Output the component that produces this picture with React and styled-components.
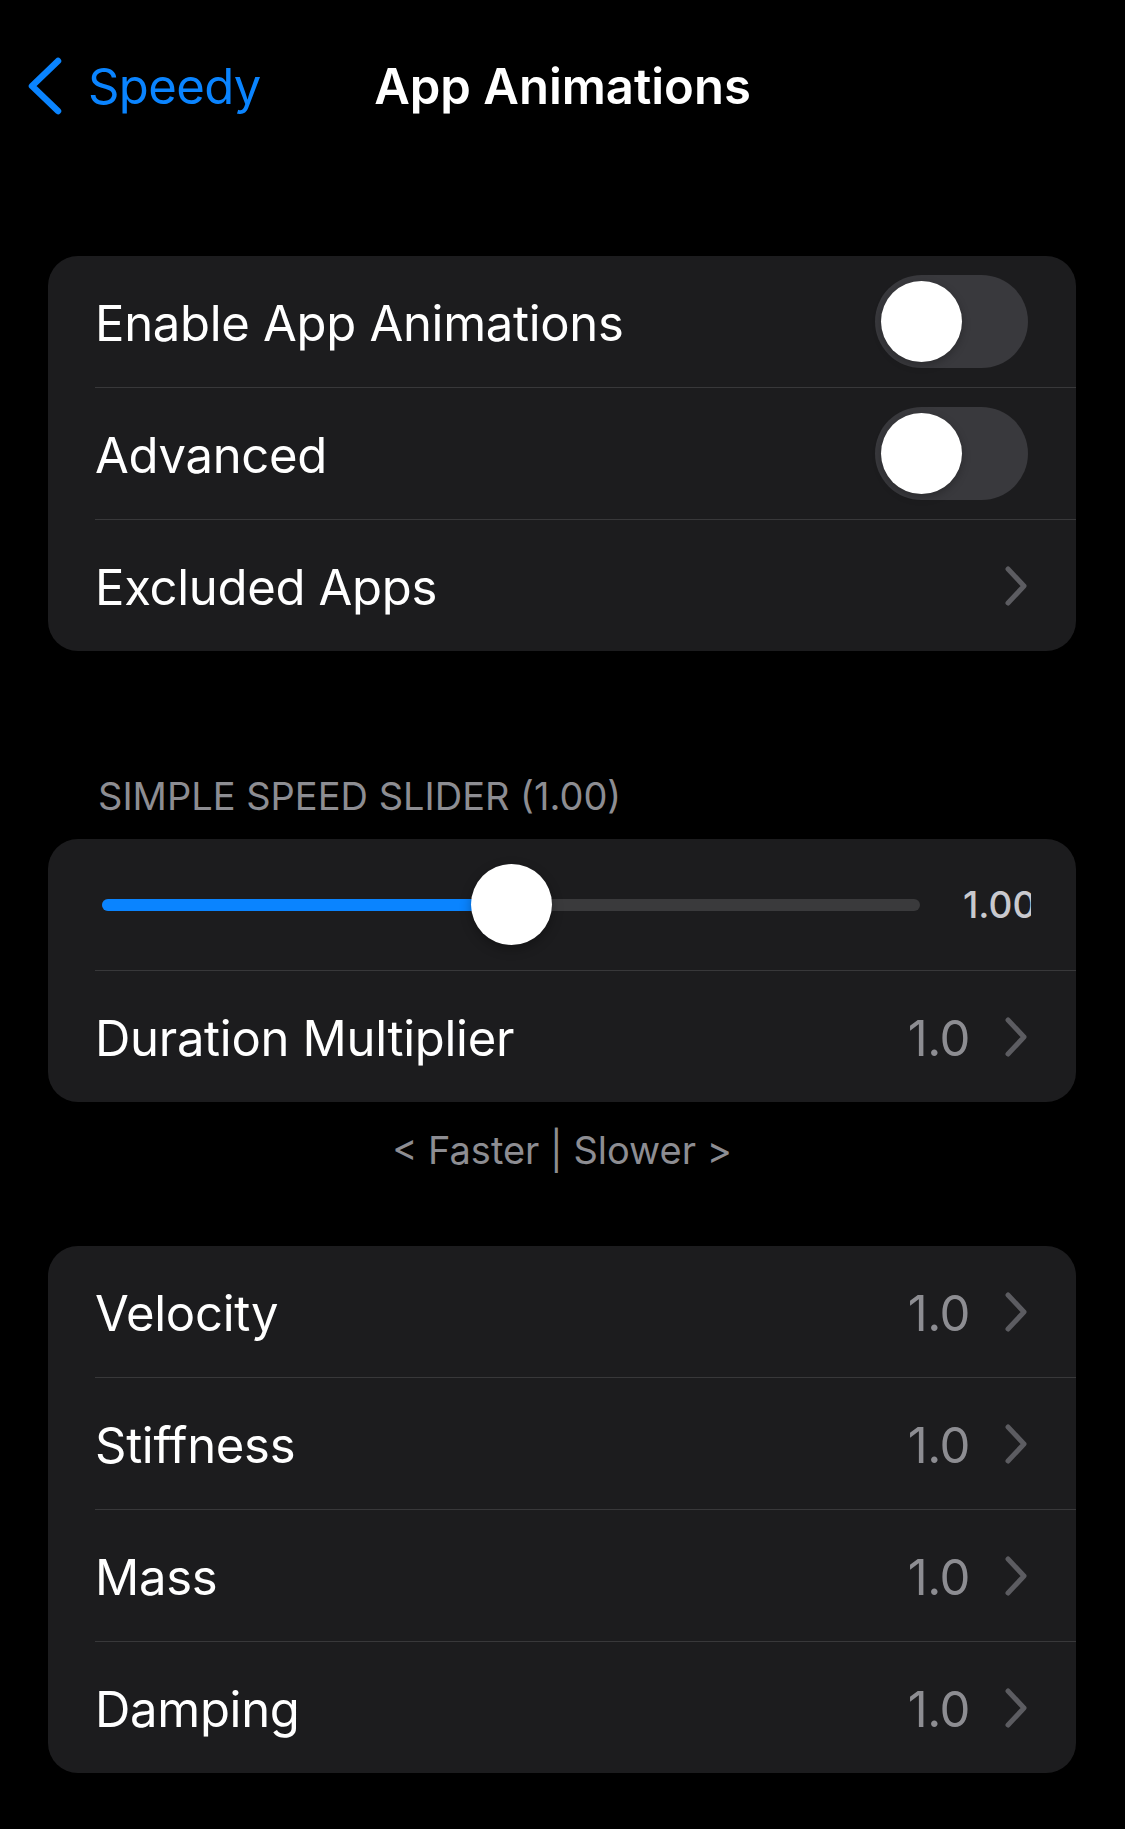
import React from "react";
import styled, { createGlobalStyle } from "styled-components";

const GlobalStyle = createGlobalStyle`
  html, body {
    margin: 0;
    padding: 0;
    background: #000000;
  }
  body {
    font-family: Inter, "Liberation Sans", Arial, sans-serif;
    color: #ffffff;
    -webkit-font-smoothing: antialiased;
  }
`;

const Page = styled.div`
  width: 1125px;
  min-height: 1829px;
  background: #000000;
  padding-bottom: 54px;
`;

const NavBar = styled.header`
  height: 172px;
  display: grid;
  grid-template-columns: 1fr auto 1fr;
  align-items: center;
`;

const BackButton = styled.div`
  display: flex;
  align-items: center;
  gap: 22px;
  padding-left: 26px;
  color: #0a84ff;
  font-size: 49px;
  letter-spacing: -0.6px;
`;

const Title = styled.h1`
  margin: 0;
  font-size: 49px;
  font-weight: 600;
  letter-spacing: 0;
`;

const Content = styled.main`
  padding: 84px 49px 0 48px;
`;

const Card = styled.section`
  background: #1c1c1e;
  border-radius: 30px;
  overflow: hidden;
`;

const Row = styled.div`
  padding-left: 47px;
  &:last-child > div {
    border-bottom: none;
  }
`;

const RowInner = styled.div`
  height: 131px;
  display: flex;
  align-items: center;
  padding-right: 48px;
  border-bottom: 1px solid #38383a;
`;

const Label = styled.span`
  flex: 1;
  padding-top: 3px;
  font-size: 49px;
  letter-spacing: -0.3px;
  color: #ffffff;
`;

const Value = styled.span`
  padding-top: 3px;
  font-size: 49px;
  letter-spacing: -0.5px;
  color: #8d8d92;
  margin-right: 34px;
`;

const Toggle = styled.div`
  width: 153px;
  height: 93px;
  border-radius: 47px;
  background: #39393d;
  padding: 6px;
  box-sizing: border-box;
  display: flex;
  justify-content: ${(p) => (p.$on ? "flex-end" : "flex-start")};
`;

const ToggleKnob = styled.div`
  width: 81px;
  height: 81px;
  border-radius: 50%;
  background: #ffffff;
  box-shadow: 0 3px 8px rgba(0, 0, 0, 0.25);
`;

const SectionHeader = styled.div`
  margin: 122px 0 19px 50px;
  font-size: 38px;
  line-height: 47px;
  letter-spacing: 0;
  color: #8d8d92;
`;

const Footer = styled.div`
  margin: 25px 0 72px;
  text-align: center;
  font-size: 38px;
  line-height: 47px;
  letter-spacing: 0;
  color: #8d8d92;
`;

const SliderWrap = styled.div`
  flex: 1;
  position: relative;
  height: 84px;
  display: flex;
  align-items: center;
  margin-left: 7px;
`;

const Track = styled.div`
  width: 100%;
  height: 12px;
  border-radius: 6px;
  background: #3a3a3c;
  overflow: hidden;
`;

const Fill = styled.div`
  height: 100%;
  background: #0a84ff;
`;

const Thumb = styled.div`
  position: absolute;
  top: 1px;
  width: 81px;
  height: 81px;
  margin-left: -40px;
  border-radius: 50%;
  background: #ffffff;
  box-shadow: 0 4px 12px rgba(0, 0, 0, 0.3);
`;

const SliderValue = styled.div`
  width: 68px;
  margin-left: 43px;
  margin-right: -3px;
  overflow: hidden;
  white-space: nowrap;
  font-size: 37px;
  font-weight: 500;
  color: #c9c9ce;
`;

const Chevron = () => (
  <svg width="24" height="40" viewBox="0 0 24 40">
    <polyline
      points="4,3 20,20 4,37"
      fill="none"
      stroke="#5c5c61"
      strokeWidth="5"
      strokeLinecap="round"
      strokeLinejoin="round"
    />
  </svg>
);

const BackChevron = () => (
  <svg width="40" height="58" viewBox="0 0 40 58">
    <polyline
      points="32,4 6,29 32,54"
      fill="none"
      stroke="#0a84ff"
      strokeWidth="6.5"
      strokeLinecap="round"
      strokeLinejoin="round"
    />
  </svg>
);

const SwitchRow = ({ label, on }) => (
  <Row>
    <RowInner>
      <Label>{label}</Label>
      <Toggle $on={on}>
        <ToggleKnob />
      </Toggle>
    </RowInner>
  </Row>
);

const LinkRow = ({ label, value }) => (
  <Row>
    <RowInner>
      <Label>{label}</Label>
      {value && <Value>{value}</Value>}
      <Chevron />
    </RowInner>
  </Row>
);

const SliderRow = ({ value }) => {
  const pct = 50;
  return (
    <Row>
      <RowInner>
        <SliderWrap>
          <Track>
            <Fill style={{ width: `${pct}%` }} />
          </Track>
          <Thumb style={{ left: `${pct}%` }} />
        </SliderWrap>
        <SliderValue>{value}</SliderValue>
      </RowInner>
    </Row>
  );
};

export default function App() {
  const physics = ["Velocity", "Stiffness", "Mass", "Damping"];
  return (
    <Page>
      <GlobalStyle />
      <NavBar>
        <BackButton>
          <BackChevron />
          <span>Speedy</span>
        </BackButton>
        <Title>App Animations</Title>
        <div />
      </NavBar>
      <Content>
        <Card>
          <SwitchRow label="Enable App Animations" on={false} />
          <SwitchRow label="Advanced" on={false} />
          <LinkRow label="Excluded Apps" />
        </Card>

        <SectionHeader>SIMPLE SPEED SLIDER (1.00)</SectionHeader>
        <Card>
          <SliderRow value="1.00" />
          <LinkRow label="Duration Multiplier" value="1.0" />
        </Card>
        <Footer>&lt; Faster | Slower &gt;</Footer>

        <Card>
          {physics.map((name) => (
            <LinkRow key={name} label={name} value="1.0" />
          ))}
        </Card>
      </Content>
    </Page>
  );
}
